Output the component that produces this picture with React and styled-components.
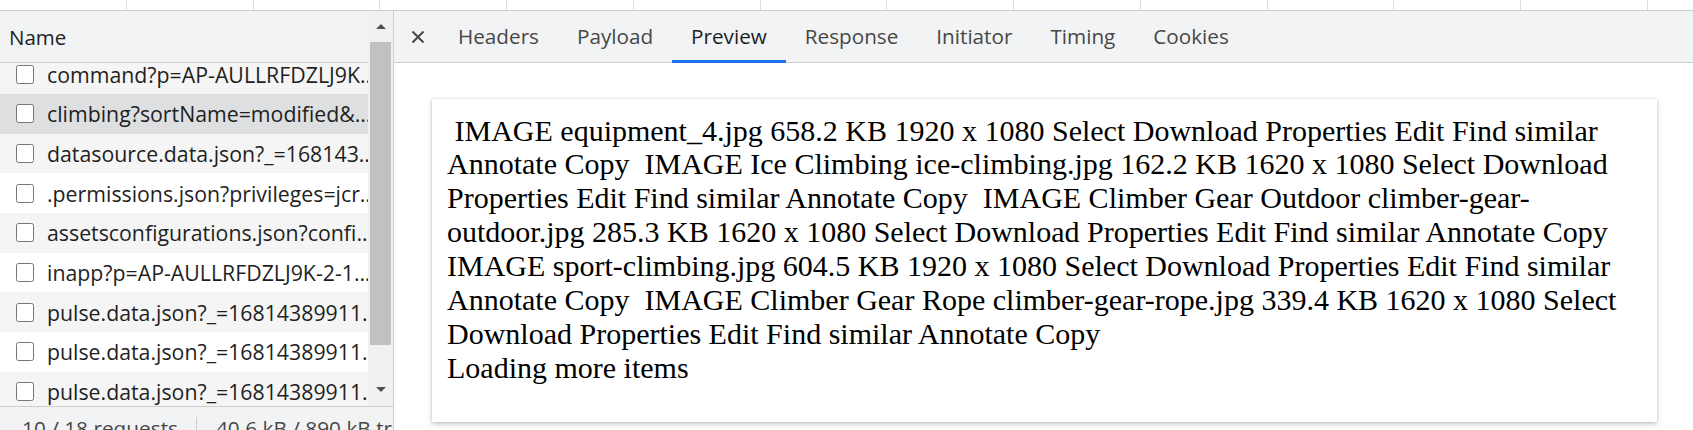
import React from 'react';
import styled, { createGlobalStyle } from 'styled-components';

const GlobalStyle = createGlobalStyle`
  html, body { margin: 0; padding: 0; background: #fff; }
  body { font-family: "Open Sans", "Noto Sans", sans-serif; overflow: hidden; }
  * { box-sizing: border-box; }
`;

const Page = styled.div`
  width: 1693px;
  height: 430px;
  overflow: hidden;
  display: flex;
  flex-direction: column;
  background: #fff;
`;

const TopStrip = styled.div`
  flex: none;
  height: 11px;
  display: flex;
  border-bottom: 1px solid #cbcdd1;
  background: #fff;
  overflow: hidden;
`;

const StripCell = styled.div`
  flex: none;
  width: 126.75px;
  height: 100%;
  border-right: 1px solid #dcdee2;
`;

const Main = styled.div`
  flex: 1;
  display: flex;
  min-height: 0;
`;

const LeftPanel = styled.div`
  flex: none;
  width: 394px;
  display: flex;
  flex-direction: column;
  border-right: 1px solid #cbcdd1;
`;

const ScrollArea = styled.div`
  flex: none;
  height: 395px;
  display: flex;
  min-height: 0;
`;

const ListColumn = styled.div`
  flex: 1;
  min-width: 0;
  display: flex;
  flex-direction: column;
`;

const NameHeader = styled.div`
  flex: none;
  height: 52px;
  display: flex;
  align-items: center;
  padding-left: 9px;
  background: #f1f3f4;
  border-bottom: 1px solid #cbcdd1;
  font-size: 20.5px;
  color: #1f1f1f;
`;

const RowViewport = styled.div`
  flex: 1;
  overflow: hidden;
  min-height: 0;
`;

const RowList = styled.div`
  width: calc(100% + 13px);
  margin-top: -8.7px;
`;

const Row = styled.div`
  height: 39.67px;
  display: flex;
  align-items: center;
  padding-left: 16px;
  gap: 13px;
  background: ${p => (p.$selected ? '#dedfe1' : p.$striped ? '#f5f5f5' : '#ffffff')};
  font-size: 21.3px;
  color: #1f1f1f;
  white-space: nowrap;
`;

const CheckBox = styled.span`
  flex: none;
  width: 18px;
  height: 19px;
  border: 1.5px solid #767676;
  border-radius: 2.5px;
  background: #fff;
`;

const RowName = styled.span`
  flex: 1;
  min-width: 0;
  overflow: hidden;
  text-overflow: ellipsis;
`;

const Scrollbar = styled.div`
  flex: none;
  width: 25px;
  display: flex;
  flex-direction: column;
  align-items: center;
  background: #f1f1f1;
`;

const ArrowButton = styled.div`
  flex: none;
  width: 100%;
  height: ${p => p.$h}px;
  display: flex;
  justify-content: center;
  align-items: ${p => (p.$down ? 'flex-start' : 'center')};
  padding-top: ${p => (p.$down ? '6px' : '0')};
`;

const Triangle = styled.span`
  width: 0;
  height: 0;
  border-left: 5px solid transparent;
  border-right: 5px solid transparent;
  ${p => (p.$down ? 'border-top: 5px solid #505050;' : 'border-bottom: 5px solid #505050;')}
`;

const Thumb = styled.div`
  flex: none;
  width: 21px;
  height: 303px;
  margin-left: -1px;
  background: #c1c1c1;
`;

const Spacer = styled.div`
  flex: 1;
`;

const StatusBar = styled.div`
  flex: none;
  height: 40px;
  display: flex;
  align-items: flex-start;
  padding: 8px 0 0 22px;
  background: #f1f3f4;
  border-top: 1px solid #cbcdd1;
  font-size: 20.8px;
  line-height: 27px;
  color: #474747;
  white-space: nowrap;
  overflow: hidden;
`;

const StatusDivider = styled.span`
  flex: none;
  width: 1px;
  height: 30px;
  margin: 2px 19px 0 18px;
  background: #cbcdd1;
`;

const RightPanel = styled.div`
  flex: 1;
  min-width: 0;
  display: flex;
  flex-direction: column;
`;

const TabBar = styled.div`
  flex: none;
  height: 52px;
  display: flex;
  align-items: stretch;
  background: #f1f3f4;
  border-bottom: 1px solid #cbcdd1;
`;

const CloseButton = styled.div`
  flex: none;
  width: 24px;
  margin-left: 12px;
  display: flex;
  align-items: center;
  justify-content: center;
  color: #474747;
`;

const Tabs = styled.div`
  display: flex;
  margin-left: 9px;
`;

const Tab = styled.div`
  position: relative;
  display: flex;
  align-items: center;
  padding: 0 19px 2px;
  font-size: 20.7px;
  color: ${p => (p.$active ? '#1f1f1f' : '#474747')};
  &::after {
    content: '';
    display: ${p => (p.$active ? 'block' : 'none')};
    position: absolute;
    left: 0;
    right: 0;
    bottom: -1px;
    height: 3px;
    background: #1a73e8;
  }
`;

const PreviewArea = styled.div`
  flex: 1;
  background: #fff;
  padding: 36px 36px 0 38px;
  min-height: 0;
`;

const Card = styled.div`
  background: #fff;
  padding: 14.5px 15px 36.5px;
  box-shadow: 0 2px 5px rgba(0, 0, 0, 0.22), 0 0 2px rgba(0, 0, 0, 0.12);
  font-family: "Liberation Serif", "Times New Roman", serif;
  font-size: 30px;
  line-height: 33.94px;
  color: #000;
`;

const ItemThumb = styled.span`
  display: inline-block;
  width: 0;
  height: 0;
`;

const LoadingLine = styled.div``;

const requests = [
  'command?p=AP-AULLRFDZLJ9K-2-1681438991...',
  'climbing?sortName=modified&sortDirection=desc',
  'datasource.data.json?_=1681438991123',
  '.permissions.json?privileges=jcr:write',
  'assetsconfigurations.json?config=assets',
  'inapp?p=AP-AULLRFDZLJ9K-2-1681438991',
  'pulse.data.json?_=1681438991124',
  'pulse.data.json?_=1681438991125',
  'pulse.data.json?_=1681438991126',
];

const tabs = ['Headers', 'Payload', 'Preview', 'Response', 'Initiator', 'Timing', 'Cookies'];

const items = [
  'equipment_4.jpg 658.2 KB 1920 x 1080',
  'Ice Climbing ice-climbing.jpg 162.2 KB 1620 x 1080',
  'Climber Gear Outdoor climber-gear-outdoor.jpg 285.3 KB 1620 x 1080',
  'sport-climbing.jpg 604.5 KB 1920 x 1080',
  'Climber Gear Rope climber-gear-rope.jpg 339.4 KB 1620 x 1080',
];

const actions = 'Select Download Properties Edit Find similar Annotate Copy';

export default function App() {
  return (
    <Page>
      <GlobalStyle />
      <TopStrip>
        {Array.from({ length: 14 }).map((_, i) => (
          <StripCell key={i} />
        ))}
      </TopStrip>
      <Main>
        <LeftPanel>
          <ScrollArea>
            <ListColumn>
              <NameHeader>Name</NameHeader>
              <RowViewport>
                <RowList>
                  {requests.map((r, i) => (
                    <Row key={i} $selected={i === 1} $striped={i % 2 === 0}>
                      <CheckBox />
                      <RowName>{r}</RowName>
                    </Row>
                  ))}
                </RowList>
              </RowViewport>
            </ListColumn>
            <Scrollbar>
              <ArrowButton $h={31}>
                <Triangle />
              </ArrowButton>
              <Thumb />
              <Spacer />
              <ArrowButton $h={25} $down>
                <Triangle $down />
              </ArrowButton>
            </Scrollbar>
          </ScrollArea>
          <StatusBar>
            <span>10 / 18 requests</span>
            <StatusDivider />
            <span>40.6 kB / 890 kB transferred</span>
          </StatusBar>
        </LeftPanel>
        <RightPanel>
          <TabBar>
            <CloseButton>
              <svg width="14" height="14" viewBox="0 0 14 14">
                <path d="M1.5 1.5 L12.5 12.5 M12.5 1.5 L1.5 12.5" stroke="#474747" strokeWidth="2" fill="none" />
              </svg>
            </CloseButton>
            <Tabs>
              {tabs.map(t => (
                <Tab key={t} $active={t === 'Preview'}>
                  {t}
                </Tab>
              ))}
            </Tabs>
          </TabBar>
          <PreviewArea>
            <Card>
              <div>
                {items.map((it, i) => (
                  <React.Fragment key={i}>
                    <ItemThumb />
                    {` IMAGE ${it} ${actions} `}
                  </React.Fragment>
                ))}
              </div>
              <LoadingLine>Loading more items</LoadingLine>
            </Card>
          </PreviewArea>
        </RightPanel>
      </Main>
    </Page>
  );
}
